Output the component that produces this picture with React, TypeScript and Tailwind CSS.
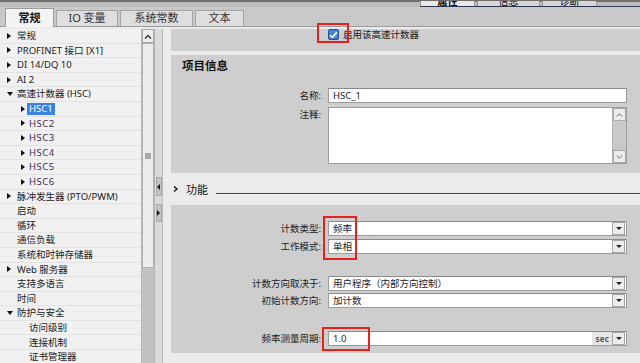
import React from 'react';

type Node = { label: string; level: number; arrow?: 'right' | 'down'; selected?: boolean };

const tree: Node[] = [
  { label: '常规', level: 0, arrow: 'right' },
  { label: 'PROFINET 接口 [X1]', level: 0, arrow: 'right' },
  { label: 'DI 14/DQ 10', level: 0, arrow: 'right' },
  { label: 'AI 2', level: 0, arrow: 'right' },
  { label: '高速计数器 (HSC)', level: 0, arrow: 'down' },
  { label: 'HSC1', level: 1, arrow: 'right', selected: true },
  { label: 'HSC2', level: 1, arrow: 'right' },
  { label: 'HSC3', level: 1, arrow: 'right' },
  { label: 'HSC4', level: 1, arrow: 'right' },
  { label: 'HSC5', level: 1, arrow: 'right' },
  { label: 'HSC6', level: 1, arrow: 'right' },
  { label: '脉冲发生器 (PTO/PWM)', level: 0, arrow: 'right' },
  { label: '启动', level: 0 },
  { label: '循环', level: 0 },
  { label: '通信负载', level: 0 },
  { label: '系统和时钟存储器', level: 0 },
  { label: 'Web 服务器', level: 0, arrow: 'right' },
  { label: '支持多语言', level: 0 },
  { label: '时间', level: 0 },
  { label: '防护与安全', level: 0, arrow: 'down' },
  { label: '访问级别', level: 1 },
  { label: '连接机制', level: 1 },
  { label: '证书管理器', level: 1 },
];

function Arrow({ dir }: { dir: 'right' | 'down' }) {
  if (dir === 'down') {
    return <span className="block w-0 h-0 border-l-[3.5px] border-r-[3.5px] border-t-[4px] border-l-transparent border-r-transparent border-t-[#111]" />;
  }
  return <span className="block w-0 h-0 border-t-[3.5px] border-b-[3.5px] border-l-[4px] border-t-transparent border-b-transparent border-l-[#111]" />;
}

function DropButton() {
  return (
    <div className="w-[13px] h-[13px] mr-[1px] flex items-center justify-center bg-[#ececec] border border-[#a8a8a8]">
      <span className="block w-0 h-0 border-l-[3px] border-r-[3px] border-t-[3px] border-l-transparent border-r-transparent border-t-[#222]" />
    </div>
  );
}

function Field({ label, value, select, unit }: { label: string; value: string; select?: boolean; unit?: string }) {
  return (
    <div className="flex items-center h-[15px]">
      <div className="w-[151px] text-right pr-[1px] text-[9.5px] text-[#1c1c1c] leading-none">{label}</div>
      <div className="ml-[6px] w-[299px] h-[15px] flex items-center bg-white border border-[#9c9c9c] border-t-[#8a8a8a]">
        <span className="flex-1 pl-[4px] text-[9.5px] text-[#1c1c2c] leading-none">{value}</span>
        {unit && <span className="h-full flex items-center px-[3px] bg-[#e6e6e6] text-[8px] font-bold text-[#555] tracking-wide">{unit}</span>}
        {select && <DropButton />}
      </div>
    </div>
  );
}

export default function App() {
  return (
    <div className="relative w-[640px] h-[363px] overflow-hidden bg-[#c9c9c9] flex flex-col font-['Noto_Sans','Noto_Sans_CJK_SC',sans-serif] select-none">
      {/* top strip with cut-off inspector tabs */}
      <div className="h-[7px] flex bg-[#bdbdbd] border-t-[2px] border-[#6f6f6f]">
        <div className="flex-1" />
        <div className="flex items-end gap-[2px] pr-[43px] border-b border-[#2d3550]">
          <div className="w-[55px] h-[5px] bg-[#e9e9e9] border-x border-[#9a9a9a] overflow-hidden flex justify-center">
            <span className="text-[10px] leading-none -mt-[5px] font-bold">属性</span>
          </div>
          <div className="w-[63px] h-[5px] bg-[#d6d6d6] border-x border-[#9a9a9a] overflow-hidden flex justify-center">
            <span className="text-[10px] leading-none -mt-[5px]">信息</span>
          </div>
          <div className="w-[55px] h-[5px] bg-[#d6d6d6] border-x border-[#9a9a9a] overflow-hidden flex justify-center">
            <span className="text-[10px] leading-none -mt-[5px]">诊断</span>
          </div>
        </div>
      </div>

      {/* tab row */}
      <div className="h-[20px] flex items-end pl-[5px] gap-[2px] border-b border-[#9c9c9c]">
        <div className="w-[49px] h-[19px] -mb-[1px] bg-[#f3f3f3] border border-b-0 border-[#9c9c9c] flex items-center justify-center text-[11px] font-bold text-[#111]">常规</div>
        <div className="w-[62px] h-[16px] bg-[#dedede] border border-b-0 border-[#a4a4a4] flex items-center justify-center text-[11px] text-[#333]">IO 变量</div>
        <div className="w-[73px] h-[16px] bg-[#dedede] border border-b-0 border-[#a4a4a4] flex items-center justify-center text-[11px] text-[#333]">系统常数</div>
        <div className="w-[49px] h-[16px] bg-[#dedede] border border-b-0 border-[#a4a4a4] flex items-center justify-center text-[11px] text-[#333]">文本</div>
      </div>

      <div className="flex-1 flex min-h-0 pt-[2px] bg-[#ebebeb]">
        {/* navigation tree */}
        <div className="w-[141px] bg-[#f1f1f1] flex flex-col overflow-hidden">
          {tree.map((n) => (
            <div key={n.label} className="h-[14.6px] shrink-0 flex items-center border-b border-[#e3e3e3]">
              <div className={n.level === 0 ? 'w-[17px] pl-[7px] flex' : 'w-[29px] pl-[21px] flex'}>
                {n.arrow && <Arrow dir={n.arrow} />}
              </div>
              <span
                className={
                  n.selected
                    ? 'text-[9.5px] leading-none px-[2px] -ml-[2px] py-[1px] bg-[#3a82e4] text-white'
                    : n.label.startsWith('HSC')
                    ? 'text-[9.5px] leading-none text-[#3a2c52] tracking-[0.5px]'
                    : 'text-[9.5px] leading-none text-[#1a1a1a]'
                }
              >
                {n.label}
              </span>
            </div>
          ))}
        </div>

        {/* scrollbar */}
        <div className="w-[14px] flex flex-col bg-[#c2c2c2] border-x border-[#b5b5b5]">
          <div className="h-[14px] bg-[#eeeeee] border border-[#a9a9a9] flex items-center justify-center">
            <svg width="8" height="5" viewBox="0 0 8 5"><path d="M1 4.5 L4 1.5 L7 4.5" fill="none" stroke="#333" strokeWidth="1.3" /></svg>
          </div>
          <div className="h-[225px] bg-[#ececec] border border-[#b0b0b0] flex items-center justify-center">
            <div className="w-[6px] h-[6px] bg-[#a9a9a9]" />
          </div>
        </div>

        {/* splitter */}
        <div className="w-[8px] flex flex-col items-center bg-[#dadada] border-r border-[#bdbdbd]">
          <div className="mt-[148px] w-[6px] h-[19px] bg-[#c4c4c4] border border-[#a8a8a8] flex items-center justify-center">
            <span className="block w-0 h-0 border-t-[3px] border-b-[3px] border-r-[3px] border-t-transparent border-b-transparent border-r-[#111]" />
          </div>
          <div className="mt-[8px] w-[6px] h-[18px] bg-[#c4c4c4] border border-[#a8a8a8] flex items-center justify-center">
            <span className="block w-0 h-0 border-t-[3px] border-b-[3px] border-l-[3px] border-t-transparent border-b-transparent border-l-[#111]" />
          </div>
        </div>

        {/* property content */}
        <div className="flex-1 ml-[8px] flex flex-col">
          <div className="h-[22px] bg-[#cecece] flex items-start pt-[0px] pl-[157px] gap-[4px]">
            <div className="w-[11px] h-[11px] rounded-[2px] bg-[#4a83d6] border border-[#254f93] flex items-center justify-center">
              <svg width="9" height="8" viewBox="0 0 9 8"><path d="M1.2 4.2 L3.4 6.4 L7.8 1.4" fill="none" stroke="#fff" strokeWidth="1.6" /></svg>
            </div>
            <span className="text-[9.5px] leading-[11px] text-[#1a1a1a]">启用该高速计数器</span>
          </div>

          <div className="h-[4px]" />

          <div className="h-[118px] bg-[#cecece] flex flex-col">
            <div className="pl-[11px] pt-[4px] h-[24px] text-[11.5px] font-bold text-[#111] leading-[14px]">项目信息</div>
            <div className="mt-[9px]">
              <Field label="名称:" value="HSC_1" />
            </div>
            <div className="mt-[4px] flex items-start">
              <div className="w-[151px] text-right pr-[1px] text-[9.5px] text-[#1c1c1c] leading-none pt-[3px]">注释:</div>
              <div className="ml-[6px] w-[299px] h-[57px] flex bg-white border border-[#9c9c9c]">
                <div className="flex-1" />
                <div className="w-[14px] flex flex-col bg-[#c9c9c9] border-l border-[#b4b4b4]">
                  <div className="h-[13px] bg-[#ececec] border border-[#a9a9a9] flex items-center justify-center">
                    <svg width="7" height="4" viewBox="0 0 7 4"><path d="M0.8 3.5 L3.5 0.8 L6.2 3.5" fill="none" stroke="#666" strokeWidth="1" /></svg>
                  </div>
                  <div className="flex-1" />
                  <div className="h-[13px] bg-[#ececec] border border-[#a9a9a9] flex items-center justify-center">
                    <svg width="7" height="4" viewBox="0 0 7 4"><path d="M0.8 0.5 L3.5 3.2 L6.2 0.5" fill="none" stroke="#666" strokeWidth="1" /></svg>
                  </div>
                </div>
              </div>
            </div>
          </div>

          {/* section header */}
          <div className="h-[32px] flex items-center -ml-[2px]">
            <svg width="10" height="8" viewBox="0 0 10 8" className="ml-[2px]"><path d="M3 1.5 L6 4 L3 6.5" fill="none" stroke="#111" strokeWidth="1.4" /></svg>
            <span className="ml-[5px] text-[11px] text-[#111] leading-none">功能</span>
            <div className="flex-1 ml-[8px] mt-[9px] h-[2px] border-t border-[#3c3c3c] border-b border-b-[#f7f7f7]" />
          </div>

          <div className="h-[148px] bg-[#cecece] flex flex-col pt-[16px]">
            <Field label="计数类型:" value="频率" select />
            <div className="mt-[3px]"><Field label="工作模式:" value="单相" select /></div>
            <div className="mt-[22px]"><Field label="计数方向取决于:" value="用户程序（内部方向控制）" select /></div>
            <div className="mt-[2px]"><Field label="初始计数方向:" value="加计数" select /></div>
            <div className="mt-[23px]"><Field label="频率测量周期:" value="1.0" unit="sec" select /></div>
          </div>
        </div>
      </div>

      {/* red annotation boxes */}
      <div className="absolute left-[317px] top-[23px] w-[32px] h-[20px] border-2 border-[#e3211f]" />
      <div className="absolute left-[323px] top-[216px] w-[34px] h-[44px] border-2 border-[#e3211f]" />
      <div className="absolute left-[322px] top-[327px] w-[48px] h-[24px] border-2 border-[#e3211f]" />
    </div>
  );
}
